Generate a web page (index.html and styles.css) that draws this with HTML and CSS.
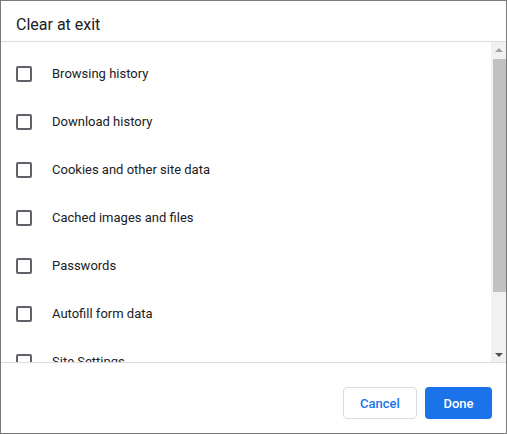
FILE: index.html
```html
<!DOCTYPE html>
<html lang="en">
<head>
  <meta charset="UTF-8">
  <title>Clear at exit</title>
  <link rel="stylesheet" href="styles.css">
</head>
<body>
  <div class="dialog">
    <div class="dialog-title">Clear at exit</div>

    <div class="dialog-body">
      <ul class="option-list">
        <li class="option"><span class="checkbox"></span><span class="label">Browsing history</span></li>
        <li class="option"><span class="checkbox"></span><span class="label">Download history</span></li>
        <li class="option"><span class="checkbox"></span><span class="label">Cookies and other site data</span></li>
        <li class="option"><span class="checkbox"></span><span class="label">Cached images and files</span></li>
        <li class="option"><span class="checkbox"></span><span class="label">Passwords</span></li>
        <li class="option"><span class="checkbox"></span><span class="label">Autofill form data</span></li>
        <li class="option"><span class="checkbox"></span><span class="label">Site Settings</span></li>
        <li class="option"><span class="checkbox"></span><span class="label">Hosted app data</span></li>
      </ul>

      <!-- scrollbar -->
      <div class="scrollbar">
        <div class="scroll-btn"><span class="arrow-up"></span></div>
        <div class="scroll-track">
          <div class="scroll-thumb"></div>
        </div>
        <div class="scroll-btn"><span class="arrow-down"></span></div>
      </div>
    </div>

    <div class="dialog-footer">
      <button class="btn btn-cancel">Cancel</button>
      <button class="btn btn-done">Done</button>
    </div>
  </div>
</body>
</html>
```

FILE: styles.css
```css
* {
    margin: 0;
    padding: 0;
    box-sizing: border-box;
}

body {
    font-family: Roboto, "Liberation Sans", sans-serif;
    color: #202124;
    background: #fff;
}

.dialog {
    width: 507px;
    height: 434px;
    border: 1px solid #7a7a7a;
    display: flex;
    flex-direction: column;
    background: #fff;
}

.dialog-title {
    font-size: 16px;
    line-height: 20px;
    padding: 14px 15px 6px;
    border-bottom: 1px solid #dadce0;
}

/* list + scrollbar */
.dialog-body {
    height: 321px;
    display: flex;
    border-bottom: 1px solid #dadce0;
}

.option-list {
    flex: 1;
    list-style: none;
    overflow: hidden;
    padding-top: 8px;
}

.option {
    height: 48px;
    display: flex;
    align-items: center;
    padding-left: 15px;
    font-size: 13px;
}

.label {
    padding-bottom: 2px;
}

.checkbox {
    width: 16px;
    height: 16px;
    border: 2px solid #5f6368;
    border-radius: 2px;
    margin-right: 20px;
    flex-shrink: 0;
}

.scrollbar {
    width: 15px;
    background: #f1f1f1;
    display: flex;
    flex-direction: column;
}

.scroll-btn {
    height: 15px;
    display: flex;
    align-items: center;
    justify-content: center;
}

.arrow-up {
    width: 0;
    height: 0;
    border-left: 4px solid transparent;
    border-right: 4px solid transparent;
    border-bottom: 4px solid #a3a3a3;
}

.arrow-down {
    width: 0;
    height: 0;
    border-left: 4px solid transparent;
    border-right: 4px solid transparent;
    border-top: 4px solid #505050;
}

.scroll-track {
    flex: 1;
    padding-top: 2px;
}

.scroll-thumb {
    height: 233px;
    margin-left: 2px;
    background: #c1c1c1;
}

.dialog-footer {
    flex: 1;
    display: flex;
    justify-content: flex-end;
    align-items: flex-start;
    gap: 8px;
    padding: 24px 14px 0 0;
}

.btn {
    height: 32px;
    border-radius: 4px;
    font-family: Roboto, "Liberation Sans", sans-serif;
    font-size: 13px;
    font-weight: 500;
    cursor: pointer;
}

.btn-cancel {
    width: 74px;
    background: #fff;
    color: #1a73e8;
    border: 1px solid #dadce0;
}

.btn-done {
    width: 67px;
    background: #1a73e8;
    color: #fff;
    border: none;
}
```
